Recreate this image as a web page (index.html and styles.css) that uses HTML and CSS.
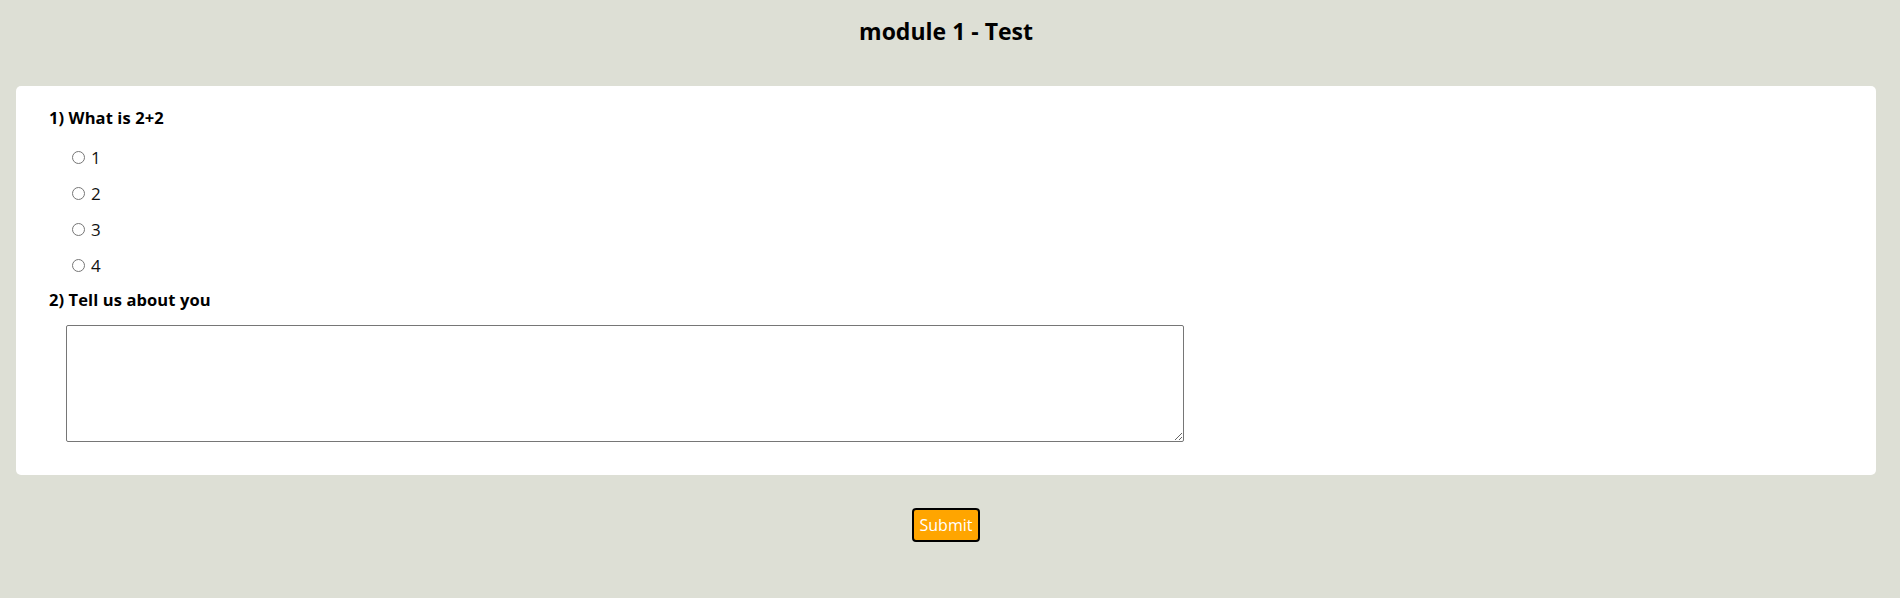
FILE: index.html
```html
<!DOCTYPE html>
<html lang="en">
<head>
<meta charset="utf-8">
<title>module 1 - Test</title>
<link rel="stylesheet" href="styles.css">
</head>
<body>
<div class="page">
  <h1 class="title">module 1 - Test</h1>
  <form class="card">
    <div class="question">
      <p class="q-label">1) What is 2+2</p>
      <div class="options">
        <label class="option"><input type="radio" name="q1" value="1"><span>1</span></label>
        <label class="option"><input type="radio" name="q1" value="2"><span>2</span></label>
        <label class="option"><input type="radio" name="q1" value="3"><span>3</span></label>
        <label class="option"><input type="radio" name="q1" value="4"><span>4</span></label>
      </div>
    </div>
    <div class="question">
      <p class="q-label">2) Tell us about you</p>
      <textarea class="answer"></textarea>
    </div>
  </form>
  <div class="actions">
    <button type="button" class="submit">Submit</button>
  </div>
</div>
</body>
</html>
```

FILE: styles.css
```css
html, body {
  margin: 0;
  background: #dddfd5;
}
body {
  font-family: "Open Sans", "Noto Sans", sans-serif;
  color: #000;
}
.page {
  padding: 0 24px 0 16px;
}
.title {
  margin: 0;
  padding-top: 15px;
  height: 71px;
  font-size: 23px;
  line-height: 32px;
  font-weight: 700;
  text-align: center;
}
.card {
  background: #fff;
  border-radius: 5px;
  padding: 20px 33px 33px 33px;
  display: flex;
  flex-direction: column;
}
.q-label {
  margin: 0;
  font-size: 16.5px;
  line-height: 24px;
  font-weight: 700;
  letter-spacing: 0.1px;
}
.options {
  display: flex;
  flex-direction: column;
  padding: 9px 0 5px 23px;
}
.option {
  display: flex;
  align-items: center;
  height: 36px;
  font-size: 17px;
  font-weight: 400;
  color: #111;
}
.option input {
  margin: 0 6px 0 0;
  width: 13px;
  height: 13px;
}
.answer {
  display: block;
  margin: 13px 0 0 17px;
  width: 1118px;
  height: 117px;
  box-sizing: border-box;
  border: 1px solid #767676;
  border-radius: 2px;
  resize: both;
}
.actions {
  display: flex;
  justify-content: center;
  padding-top: 33px;
}
.submit {
  width: 68px;
  height: 34px;
  background: #ffa500;
  color: #fff;
  border: 2px solid #000;
  border-radius: 4px;
  font-family: "Open Sans", "Noto Sans", sans-serif;
  font-size: 16px;
  padding: 0;
}
```
